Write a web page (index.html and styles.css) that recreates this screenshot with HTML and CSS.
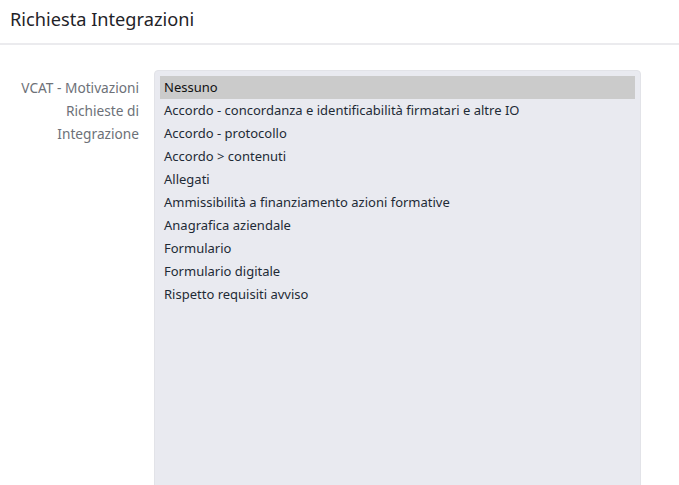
FILE: index.html
```html
<!DOCTYPE html>
<html lang="it">
<head>
<meta charset="utf-8">
<title>Richiesta Integrazioni</title>
<link rel="stylesheet" href="styles.css">
</head>
<body>
<header class="header">
  <h1 class="title">Richiesta Integrazioni</h1>
</header>
<main class="content">
  <div class="form-row">
    <label class="label" for="motivazioni">VCAT - Motivazioni Richieste di Integrazione</label>
    <div class="listbox" id="motivazioni" role="listbox">
      <div class="option selected">Nessuno</div>
      <div class="option">Accordo - concordanza e identificabilità firmatari e altre IO</div>
      <div class="option">Accordo - protocollo</div>
      <div class="option">Accordo &gt; contenuti</div>
      <div class="option">Allegati</div>
      <div class="option">Ammissibilità a finanziamento azioni formative</div>
      <div class="option">Anagrafica aziendale</div>
      <div class="option">Formulario</div>
      <div class="option">Formulario digitale</div>
      <div class="option">Rispetto requisiti avviso</div>
    </div>
  </div>
</main>
</body>
</html>
```
FILE: styles.css
```css
* { box-sizing: border-box; }
html, body { margin: 0; padding: 0; background: #fff; }
body {
  font-family: "Noto Sans", "Open Sans", sans-serif;
  color: #212529;
  overflow: hidden;
  height: 485px;
}
.header {
  height: 45px;
  border-bottom: 2px solid #ebebee;
  padding: 6px 10px 0;
}
.title {
  margin: 0;
  font-size: 18.2px;
  font-weight: 400;
  line-height: 26px;
  color: #1f2328;
}
.content {
  padding-top: 25px;
}
.form-row {
  display: flex;
  align-items: flex-start;
}
.label {
  width: 154px;
  padding: 6px 15px 0 10px;
  text-align: right;
  font-size: 13.7px;
  line-height: 23px;
  color: #6d7178;
}
.listbox {
  width: 487px;
  height: 430px;
  background: #e9eaf0;
  border: 1px solid #e2e3e8;
  border-radius: 4px 4px 0 0;
  padding: 5px 5px;
}
.option {
  height: 23px;
  line-height: 23px;
  padding: 0 4px;
  font-size: 13px;
  color: #1e2a36;
  white-space: nowrap;
}
.option.selected {
  background: #cbcbcb;
  color: #111;
}
```
